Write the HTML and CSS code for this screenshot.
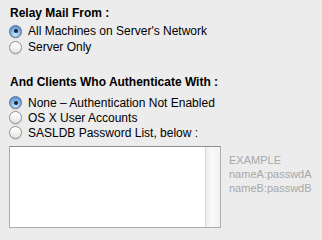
FILE: index.html
```html
<!DOCTYPE html>
<html lang="en">
<head>
    <meta charset="UTF-8">
    <title>Mail Relay</title>
    <link rel="stylesheet" href="styles.css">
</head>
<body>
    <div class="panel">
        <div class="group relay">
            <div class="group-title">Relay Mail From :</div>
            <label class="radio-row"><span class="radio checked"></span>All Machines on Server's Network</label>
            <label class="radio-row"><span class="radio"></span>Server Only</label>
        </div>

        <div class="group clients">
            <div class="group-title">And Clients Who Authenticate With :</div>
            <label class="radio-row tight"><span class="radio checked"></span>None &ndash; Authentication Not Enabled</label>
            <label class="radio-row tight"><span class="radio"></span>OS X User Accounts</label>
            <label class="radio-row tight"><span class="radio"></span>SASLDB Password List, below :</label>
        </div>

        <div class="list-area">
            <div class="text-box">
                <div class="text-body"></div>
                <div class="scroll-track"></div>
            </div>
            <div class="example">
                <div>EXAMPLE</div>
                <div>nameA:passwdA</div>
                <div>nameB:passwdB</div>
            </div>
        </div>
    </div>
</body>
</html>
```

FILE: styles.css
```css
html, body {
    margin: 0;
    padding: 0;
    background-color: #ececec;
}

body {
    font-family: 'Liberation Sans', Arial, sans-serif;
    font-size: 12px;
    color: #000;
    width: 322px;
    height: 240px;
    overflow: hidden;
}

.panel {
    padding: 5px 0 0 10px;
}

.group-title {
    font-weight: bold;
    height: 16px;
    line-height: 16px;
}

.relay .group-title {
    margin-bottom: 2px;
}

.radio-row {
    display: flex;
    align-items: center;
    height: 16px;
    line-height: 16px;
    margin-left: -1px;
}

.radio-row.tight {
    height: 15px;
}

.clients {
    margin-top: 19px;
}

.clients .group-title {
    margin-bottom: 5px;
}

.radio {
    width: 11px;
    height: 11px;
    border-radius: 50%;
    border: 1px solid #8f8f8f;
    background: linear-gradient(#ffffff, #f4f4f4 50%, #e2e2e2);
    box-shadow: 0 1px 1px rgba(0, 0, 0, 0.12);
    margin-right: 6px;
    display: flex;
    align-items: center;
    justify-content: center;
    flex-shrink: 0;
}

.radio.checked {
    border-color: #5c6e8c;
    background: radial-gradient(circle at 50% 75%, #cbe6fb 0%, #87b8e8 45%, #5c96d7 75%),
        linear-gradient(#b5d4f1, #6fa6df);
}

.radio.checked::after {
    content: '';
    width: 4px;
    height: 4px;
    border-radius: 50%;
    background: #1a1f2e;
}

.list-area {
    display: flex;
    margin-top: 6px;
    margin-left: -1px;
}

.text-box {
    width: 210px;
    height: 80px;
    border: 1px solid #acacac;
    border-top-color: #8e8e8e;
    background: #fff;
    display: flex;
}

.text-body {
    flex: 1;
}

.scroll-track {
    width: 14px;
    border-left: 1px solid #d6d6d6;
    background: linear-gradient(to right, #eeeeee, #fafafa 40%, #f2f2f2);
}

.example {
    margin-left: 8px;
    margin-top: 7px;
    font-size: 11px;
    line-height: 14px;
    color: #a8a8a8;
}
```
